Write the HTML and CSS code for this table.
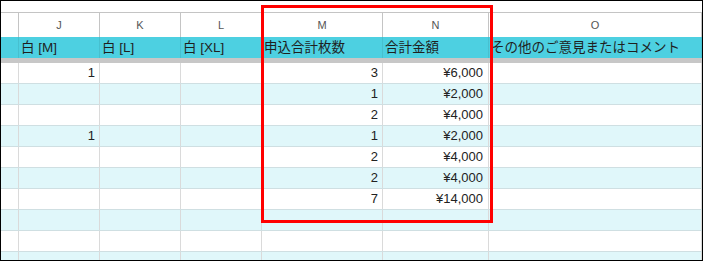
FILE: index.html
```html
<!DOCTYPE html>
<html lang="ja">
<head>
<meta charset="utf-8">
<link rel="stylesheet" href="styles.css">
</head>
<body>
<div class="frame">
  <div class="topstrip"></div>
  <div class="row colhead">
    <div class="c"></div><div class="c">J</div><div class="c">K</div><div class="c">L</div><div class="c">M</div><div class="c">N</div><div class="c">O</div>
  </div>
  <div class="row titles">
    <div class="c"></div><div class="c">白 [M]</div><div class="c">白 [L]</div><div class="c">白 [XL]</div><div class="c">申込合計枚数</div><div class="c">合計金額</div><div class="c">その他のご意見またはコメント</div>
  </div>
  <div class="freeze"></div>
  <div class="row data">
    <div class="c"></div><div class="c">1</div><div class="c"></div><div class="c"></div><div class="c">3</div><div class="c">¥6,000</div><div class="c"></div>
  </div>
  <div class="row data alt">
    <div class="c"></div><div class="c"></div><div class="c"></div><div class="c"></div><div class="c">1</div><div class="c">¥2,000</div><div class="c"></div>
  </div>
  <div class="row data">
    <div class="c"></div><div class="c"></div><div class="c"></div><div class="c"></div><div class="c">2</div><div class="c">¥4,000</div><div class="c"></div>
  </div>
  <div class="row data alt">
    <div class="c"></div><div class="c">1</div><div class="c"></div><div class="c"></div><div class="c">1</div><div class="c">¥2,000</div><div class="c"></div>
  </div>
  <div class="row data">
    <div class="c"></div><div class="c"></div><div class="c"></div><div class="c"></div><div class="c">2</div><div class="c">¥4,000</div><div class="c"></div>
  </div>
  <div class="row data alt">
    <div class="c"></div><div class="c"></div><div class="c"></div><div class="c"></div><div class="c">2</div><div class="c">¥4,000</div><div class="c"></div>
  </div>
  <div class="row data">
    <div class="c"></div><div class="c"></div><div class="c"></div><div class="c"></div><div class="c">7</div><div class="c">¥14,000</div><div class="c"></div>
  </div>
  <div class="row data alt">
    <div class="c"></div><div class="c"></div><div class="c"></div><div class="c"></div><div class="c"></div><div class="c"></div><div class="c"></div>
  </div>
  <div class="row data">
    <div class="c"></div><div class="c"></div><div class="c"></div><div class="c"></div><div class="c"></div><div class="c"></div><div class="c"></div>
  </div>
  <div class="row data alt">
    <div class="c"></div><div class="c"></div><div class="c"></div><div class="c"></div><div class="c"></div><div class="c"></div><div class="c"></div>
  </div>
  <div class="highlight"></div>
</div>
</body>
</html>
```

FILE: styles.css
```css
html, body {
  margin: 0;
  padding: 0;
  background: #ffffff;
}
.frame {
  position: relative;
  width: 703px;
  height: 261px;
  box-sizing: border-box;
  border: 1px solid #000000;
  overflow: hidden;
  background: #ffffff;
  font-family: "Liberation Sans", "Noto Sans CJK JP", sans-serif;
  color: #222222;
}
.topstrip {
  height: 11px;
  border-bottom: 1px solid #c4c4c4;
}
.row {
  display: grid;
  grid-template-columns: 18px 81px 81px 81px 121px 106px 1fr;
}
.c {
  box-sizing: border-box;
  border-right: 1px solid #dadada;
  overflow: hidden;
  white-space: nowrap;
}
.colhead {
  height: 24px;
}
.colhead .c {
  border-right-color: #c4c4c4;
  text-align: center;
  font-size: 11px;
  line-height: 24px;
  color: #555555;
}
.titles {
  height: 21px;
  background: #4dd0e1;
}
.titles .c {
  border-right-color: #47c0cf;
  font-size: 13.5px;
  line-height: 21px;
  padding-left: 2px;
  color: #1f1f1f;
}
.freeze {
  height: 5px;
  background: #c7c7c7;
}
.data {
  height: 21px;
  box-sizing: border-box;
  border-bottom: 1px solid #cfdfe2;
  background: #ffffff;
}
.data.alt {
  background: #e0f7fa;
}
.data .c {
  text-align: right;
  padding-right: 4px;
  font-size: 13px;
  line-height: 20px;
  color: #222222;
}
.data .c:nth-child(6) {
  padding-right: 5px;
}
.highlight {
  position: absolute;
  left: 260px;
  top: 4px;
  width: 232px;
  height: 218px;
  box-sizing: border-box;
  border: 3px solid #ff0000;
}
```
